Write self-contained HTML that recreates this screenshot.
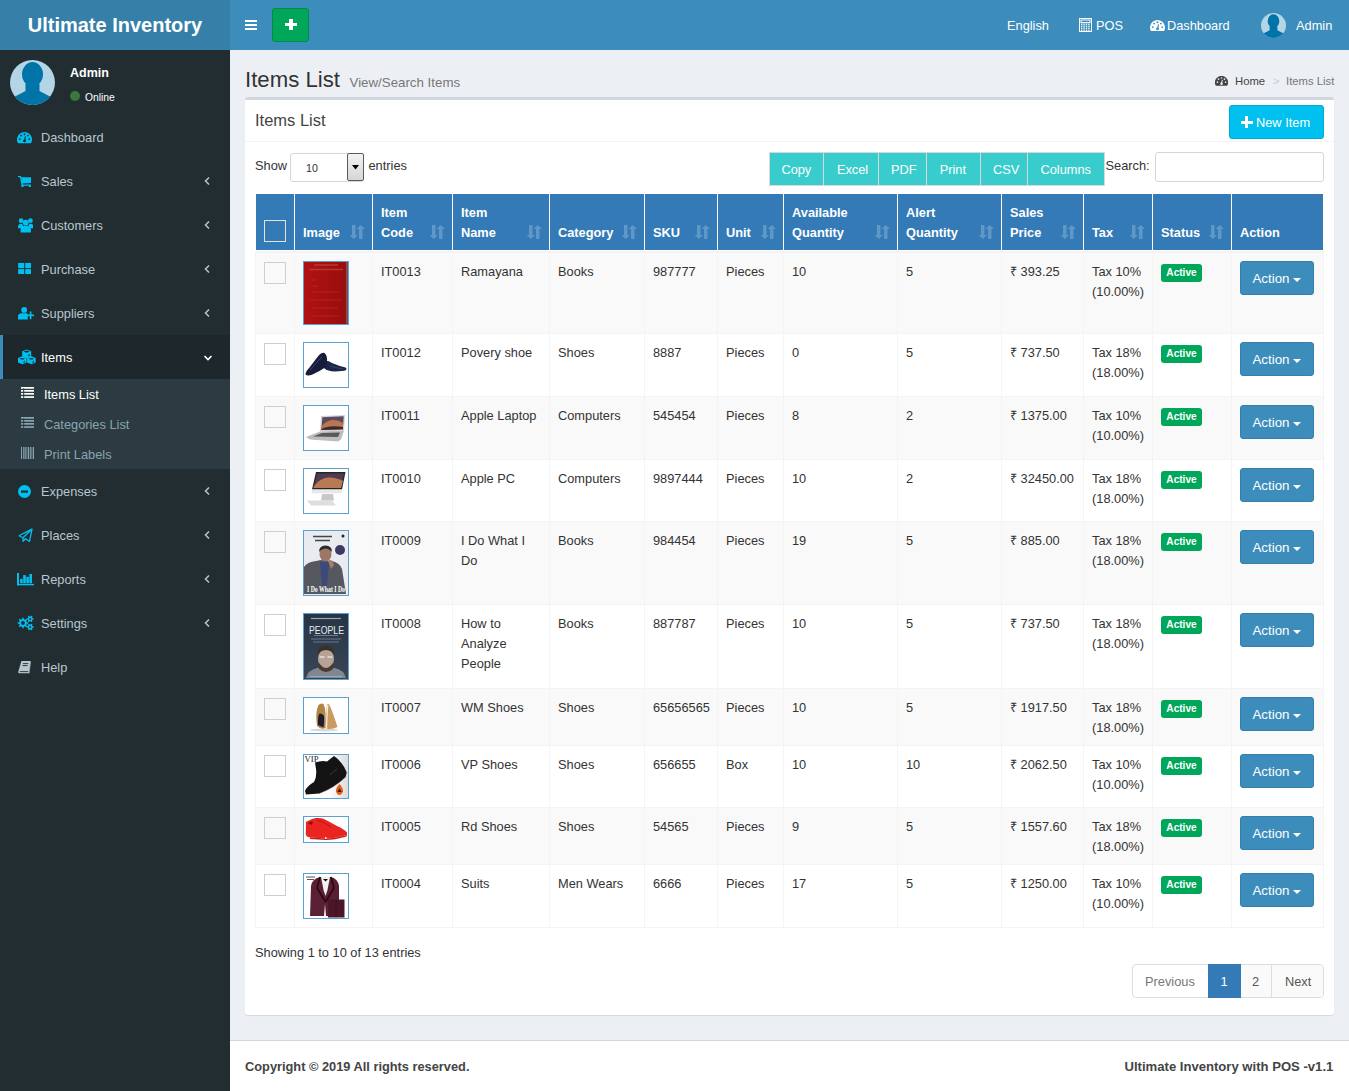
<!DOCTYPE html>
<html><head><meta charset="utf-8">
<style>
*{box-sizing:border-box;}
html,body{margin:0;padding:0;}
body{width:1349px;height:1091px;overflow:hidden;position:relative;font-family:"Liberation Sans",sans-serif;font-size:12.8px;color:#333;background:#ecf0f5;}
.abs{position:absolute;}
/* header */
#logo{left:0;top:0;width:230px;height:50px;background:#367fa9;color:#fff;font-weight:bold;font-size:20px;line-height:50px;text-align:center;}
#nav{left:230px;top:0;width:1119px;height:50px;background:#3c8dbc;}
.hb{position:absolute;left:245px;width:12px;height:2px;background:#fff;}
#plus{left:272px;top:8px;width:37px;height:34px;background:#00a65a;border:1px solid #008d4c;border-radius:3px;}
.navtxt{position:absolute;top:15.5px;line-height:20px;color:#fff;font-size:12.8px;white-space:nowrap;}
/* sidebar */
#side{left:0;top:50px;width:230px;height:1041px;background:#222d32;}
.mi{position:absolute;left:0;width:230px;height:44px;}
.mi .t{position:absolute;left:41px;top:13px;line-height:20px;color:#b8c7ce;font-size:12.8px;}
.mi svg.ic{position:absolute;left:17px;top:14px;}
.mi .ch{position:absolute;left:203px;top:17px;}
.sub{position:absolute;left:0;width:230px;height:30px;}
.sub .t{position:absolute;left:44px;top:6px;line-height:20px;color:#8aa4af;font-size:12.8px;}
.sub svg{position:absolute;left:20px;top:9px;}
/* content */
#ptitle{left:245px;top:64.5px;font-size:22.2px;line-height:30px;color:#333;white-space:nowrap;}
#psub{left:349.5px;top:73.5px;font-size:13.3px;line-height:18px;color:#777;white-space:nowrap;}
#bc{top:73px;font-size:11.3px;line-height:16px;color:#444;white-space:nowrap;}
#box{left:245px;top:97px;width:1089px;height:918px;background:#fff;border-top:3px solid #d2d6de;border-radius:3px;box-shadow:0 1px 1px rgba(0,0,0,0.1);}
#footer{left:230px;top:1040px;width:1119px;height:51px;background:#fff;border-top:1px solid #d2d6de;}
table.dt{position:absolute;left:255px;top:194px;border-collapse:collapse;table-layout:fixed;font-size:12.8px;}
table.dt th{background:#337ab7;color:#fff;font-weight:bold;text-align:left;vertical-align:bottom;border:1px solid #fff;border-top:0;border-bottom:0;padding:8px 8px 8px 8px;line-height:20px;position:relative;}
table.dt td{border:1px solid #f4f4f4;padding:8px;line-height:20px;vertical-align:top;color:#333;}
table.dt tr.odd td{background:#f9f9f9;}
.th{font-weight:bold;color:#fff;line-height:20px;white-space:nowrap;}
.td{padding-top:1px;line-height:20px;color:#333;white-space:nowrap;}
.lbl{width:40.5px;height:17.6px;background:#00a65a;border-radius:3px;color:#fff;font-weight:bold;font-size:10.1px;line-height:17.6px;text-align:center;padding-left:0.5px;}
.abtn{width:74px;height:34px;background:#3c8dbc;border:1px solid #367fa9;border-radius:3px;color:#fff;}
.abtn span{position:absolute;left:11.5px;top:7px;line-height:20px;font-size:13.3px;}
</style></head><body>
<div id="logo" class="abs">Ultimate Inventory</div>
<div id="nav" class="abs"></div>
<div class="hb" style="top:20px"></div><div class="hb" style="top:24px"></div><div class="hb" style="top:28px"></div>
<div id="plus" class="abs"></div>

<div class="navtxt" style="left:1007px;">English</div>
<svg class="abs" style="left:1079px;top:18px" width="13" height="14" viewBox="0 0 13 14"><rect x="0.5" y="0.5" width="12" height="13" fill="none" stroke="#fff" stroke-width="1"/><rect x="2" y="2" width="9" height="2.6" fill="none" stroke="#fff" stroke-width="1"/><rect x="2.0" y="5.6" width="1.4" height="1.3" fill="#fff"/><rect x="2.0" y="7.6" width="1.4" height="1.3" fill="#fff"/><rect x="2.0" y="9.6" width="1.4" height="1.3" fill="#fff"/><rect x="2.0" y="11.6" width="1.4" height="1.3" fill="#fff"/><rect x="4.4" y="5.6" width="1.4" height="1.3" fill="#fff"/><rect x="4.4" y="7.6" width="1.4" height="1.3" fill="#fff"/><rect x="4.4" y="9.6" width="1.4" height="1.3" fill="#fff"/><rect x="4.4" y="11.6" width="1.4" height="1.3" fill="#fff"/><rect x="6.8" y="5.6" width="1.4" height="1.3" fill="#fff"/><rect x="6.8" y="7.6" width="1.4" height="1.3" fill="#fff"/><rect x="6.8" y="9.6" width="1.4" height="1.3" fill="#fff"/><rect x="6.8" y="11.6" width="1.4" height="1.3" fill="#fff"/><rect x="9.2" y="5.6" width="1.4" height="1.3" fill="#fff"/><rect x="9.2" y="7.6" width="1.4" height="1.3" fill="#fff"/><rect x="9.2" y="9.6" width="1.4" height="1.3" fill="#fff"/><rect x="9.2" y="11.6" width="1.4" height="1.3" fill="#fff"/></svg>
<div class="navtxt" style="left:1096px;">POS</div>
<svg class="abs" style="left:1150px;top:19.8px" width="15" height="11.5" viewBox="0 0 15 11.5"><path d="M1.03 11.3 A7.5 7.5 0 1 1 13.97 11.3 Z" fill="#fff"/><circle cx="7.5" cy="2.3" r="0.95" fill="#3c8dbc"/><circle cx="4.1" cy="3.6" r="0.95" fill="#3c8dbc"/><circle cx="10.9" cy="3.6" r="0.95" fill="#3c8dbc"/><circle cx="2.8" cy="7.1" r="0.95" fill="#3c8dbc"/><circle cx="12.2" cy="7.1" r="0.95" fill="#3c8dbc"/><circle cx="7.5" cy="8.9" r="1.45" fill="#3c8dbc"/><path d="M6.8 8.8 L8.0 4.2 L9.0 4.5 L8.2 9.1Z" fill="#3c8dbc"/></svg>
<div class="navtxt" style="left:1167px;">Dashboard</div>
<svg class="abs" style="left:1261px;top:12.5px" width="25" height="25" viewBox="0 0 45 45"><defs><clipPath id="cav2"><circle cx="22.5" cy="22.5" r="22.5"/></clipPath></defs><g clip-path="url(#cav2)"><rect width="45" height="45" fill="#b4d5e6"/><path d="M15.5 24 L15.5 31 Q10 34 3 37.5 L0 45 L45 45 L42 37.5 Q35 34 29.5 31 L29.5 24Z M12 14.3 A10.5 12.2 0 1 0 33 14.3 A10.5 12.2 0 1 0 12 14.3Z" fill="#0074a8"/></g></svg>
<div class="navtxt" style="left:1296px;">Admin</div>
<div class="abs" style="left:284.5px;top:23px;width:12px;height:3px;background:#fff"></div>
<div class="abs" style="left:289px;top:19px;width:3.5px;height:11px;background:#fff"></div>


<div id="side" class="abs"></div>
<svg class="abs" style="left:10px;top:60px" width="45" height="45" viewBox="0 0 45 45"><defs><clipPath id="cav"><circle cx="22.5" cy="22.5" r="22.5"/></clipPath></defs><g clip-path="url(#cav)"><rect width="45" height="45" fill="#b4d5e6"/><path d="M15.5 24 L15.5 31 Q10 34 3 37.5 L0 45 L45 45 L42 37.5 Q35 34 29.5 31 L29.5 24Z M12 14.3 A10.5 12.2 0 1 0 33 14.3 A10.5 12.2 0 1 0 12 14.3Z" fill="#0074a8"/></g></svg>
<div class="abs" style="left:70px;top:63px;font-weight:bold;font-size:12.5px;line-height:20px;color:#fff">Admin</div>
<div class="abs" style="left:70px;top:91px;width:10px;height:10px;border-radius:50%;background:#3c763d"></div>
<div class="abs" style="left:85px;top:89.5px;font-size:10.3px;line-height:16px;color:#fff">Online</div>
<div class="mi" style="top:115px;"><svg style="position:absolute;left:17.2px;top:17px" width="15" height="11.5" viewBox="0 0 15 11.5"><path d="M1.03 11.3 A7.5 7.5 0 1 1 13.97 11.3 Z" fill="#00c0ef"/><circle cx="7.5" cy="2.3" r="0.95" fill="#222d32"/><circle cx="4.1" cy="3.6" r="0.95" fill="#222d32"/><circle cx="10.9" cy="3.6" r="0.95" fill="#222d32"/><circle cx="2.8" cy="7.1" r="0.95" fill="#222d32"/><circle cx="12.2" cy="7.1" r="0.95" fill="#222d32"/><circle cx="7.5" cy="8.9" r="1.45" fill="#222d32"/><path d="M6.8 8.8 L8.0 4.2 L9.0 4.5 L8.2 9.1Z" fill="#222d32"/></svg><div class="t" style="">Dashboard</div></div>
<div class="mi" style="top:159px;"><svg style="position:absolute;left:17.7px;top:16.5px" width="13.5" height="11.5" viewBox="0 0 13 11"><path d="M0 0.6 L2.4 0.6 L4 8.7 L12.4 8.7" stroke="#00c0ef" stroke-width="1.2" fill="none"/><path d="M3 1.2 L13.2 1.2 L12.8 6.6 L3.9 7.2Z" fill="#00c0ef"/><rect x="3.2" y="8.8" width="2.2" height="2.4" fill="#00c0ef"/><rect x="10.3" y="8.8" width="2.2" height="2.4" fill="#00c0ef"/></svg><div class="t" style="">Sales</div><svg class="ch" width="8" height="10" viewBox="0 0 8 10" style="left:203px;top:17px"><path d="M6 1.5 L2.5 5 L6 8.5" stroke="#b8c7ce" stroke-width="1.5" fill="none"/></svg></div>
<div class="mi" style="top:203px;"><svg style="position:absolute;left:17.7px;top:15px" width="15.5" height="14.5" viewBox="0 0 15 14"><circle cx="3" cy="2.6" r="2.3" fill="#00c0ef"/><circle cx="12" cy="2.6" r="2.3" fill="#00c0ef"/><circle cx="7.5" cy="4.5" r="2.8" fill="#00c0ef"/><path d="M0 9 Q0 5.5 3 5.5 Q5 5.5 5 8 L5 10 L0 10Z" fill="#00c0ef"/><path d="M15 9 Q15 5.5 12 5.5 Q10 5.5 10 8 L10 10 L15 10Z" fill="#00c0ef"/><path d="M2.5 14 L2.5 11 Q2.5 7.5 7.5 7.5 Q12.5 7.5 12.5 11 L12.5 14Z" fill="#00c0ef"/></svg><div class="t" style="">Customers</div><svg class="ch" width="8" height="10" viewBox="0 0 8 10" style="left:203px;top:17px"><path d="M6 1.5 L2.5 5 L6 8.5" stroke="#b8c7ce" stroke-width="1.5" fill="none"/></svg></div>
<div class="mi" style="top:247px;"><svg style="position:absolute;left:17.7px;top:16px" width="13.5" height="11.2" viewBox="0 0 13 11"><rect x="0" y="0" width="6" height="5" fill="#00c0ef"/><rect x="7" y="0" width="6" height="5" fill="#00c0ef"/><rect x="0" y="6" width="6" height="5" fill="#00c0ef"/><rect x="7" y="6" width="6" height="5" fill="#00c0ef"/></svg><div class="t" style="">Purchase</div><svg class="ch" width="8" height="10" viewBox="0 0 8 10" style="left:203px;top:17px"><path d="M6 1.5 L2.5 5 L6 8.5" stroke="#b8c7ce" stroke-width="1.5" fill="none"/></svg></div>
<div class="mi" style="top:291px;"><svg style="position:absolute;left:17.7px;top:16px" width="16.5" height="12.5" viewBox="0 0 16 12"><circle cx="6" cy="2.8" r="2.8" fill="#00c0ef"/><path d="M0 12 L0 9 Q0 6 4 6 L8 6 Q9 6 9.5 6.5 L9.5 12Z" fill="#00c0ef"/><rect x="8.5" y="7.2" width="7.5" height="1.6" fill="#00c0ef"/><rect x="11.4" y="4.3" width="1.6" height="7.5" fill="#00c0ef"/></svg><div class="t" style="">Suppliers</div><svg class="ch" width="8" height="10" viewBox="0 0 8 10" style="left:203px;top:17px"><path d="M6 1.5 L2.5 5 L6 8.5" stroke="#b8c7ce" stroke-width="1.5" fill="none"/></svg></div>
<div class="mi" style="top:335px;background:#1e282c;box-shadow:inset 3px 0 0 #3c8dbc;"><svg style="position:absolute;left:17.7px;top:14px;overflow:visible" width="17.5" height="14.5" viewBox="0 0 17.5 14.5"><path d="M4.2 2.3 L8.7 0.6 L13.2 2.3 L13.2 7.5 L8.7 9.2 L4.2 7.5Z" fill="#00c0ef"/><path d="M5.6 2.6 L8.7 1.6 L11.8 2.6 L8.7 3.8Z" fill="#1e282c"/><path d="M0 9 L4.3 7.3 L8.6 9 L8.6 13.6 L4.3 15.3 L0 13.6Z" fill="#00c0ef"/><path d="M9.1 9 L13.4 7.3 L17.7 9 L17.7 13.6 L13.4 15.3 L9.1 13.6Z" fill="#00c0ef"/><path d="M1.6 9.3 L6.8 9.3 L5.6 10.5 L2.8 10.5Z" fill="#1e282c"/><path d="M10.7 9.3 L15.9 9.3 L14.7 10.5 L11.9 10.5Z" fill="#1e282c"/><path d="M5.3 13 L6.8 11.6 L6.8 13.2 L5.5 14Z" fill="#1e282c"/><path d="M14.4 13 L15.9 11.6 L15.9 13.2 L14.6 14Z" fill="#1e282c"/><path d="M10 6 L11.8 5 L11.8 6.5 L10.4 7.3Z" fill="#1e282c"/></svg><div class="t" style="color:#fff;">Items</div><svg class="ch" width="10" height="10" viewBox="0 0 10 10" style="left:203px;top:18px"><path d="M1.5 3 L5 6.5 L8.5 3" stroke="#fff" stroke-width="1.6" fill="none"/></svg></div>
<div class="abs" style="left:0;top:379px;width:230px;height:90px;background:#2c3b41"></div>
<div class="sub" style="top:379px"><svg style="position:absolute;left:20.5px;top:8px" width="13" height="11" viewBox="0 0 13 11"><rect x="0" y="0" width="2.2" height="1.7" fill="#fff"/><rect x="3.2" y="0" width="9.8" height="1.7" fill="#fff"/><rect x="0" y="3" width="2.2" height="1.7" fill="#fff"/><rect x="3.2" y="3" width="9.8" height="1.7" fill="#fff"/><rect x="0" y="6" width="2.2" height="1.7" fill="#fff"/><rect x="3.2" y="6" width="9.8" height="1.7" fill="#fff"/><rect x="0" y="9.2" width="2.2" height="1.7" fill="#fff"/><rect x="3.2" y="9.2" width="9.8" height="1.7" fill="#fff"/><rect x="0" y="0" width="13" height="1.2" fill="#fff"/></svg><div class="t" style="color:#fff;">Items List</div></div>
<div class="sub" style="top:409px"><svg style="position:absolute;left:20.5px;top:8px" width="13" height="11" viewBox="0 0 13 11"><rect x="0" y="0" width="2.2" height="1.7" fill="#8aa4af"/><rect x="3.2" y="0" width="9.8" height="1.7" fill="#8aa4af"/><rect x="0" y="3" width="2.2" height="1.7" fill="#8aa4af"/><rect x="3.2" y="3" width="9.8" height="1.7" fill="#8aa4af"/><rect x="0" y="6" width="2.2" height="1.7" fill="#8aa4af"/><rect x="3.2" y="6" width="9.8" height="1.7" fill="#8aa4af"/><rect x="0" y="9.2" width="2.2" height="1.7" fill="#8aa4af"/><rect x="3.2" y="9.2" width="9.8" height="1.7" fill="#8aa4af"/><rect x="0" y="0" width="13" height="1.2" fill="#8aa4af"/></svg><div class="t" style="">Categories List</div></div>
<div class="sub" style="top:439px"><svg style="position:absolute;left:20.5px;top:8px" width="13" height="12" viewBox="0 0 13 12"><rect x="0" y="0" width="1" height="12" fill="#8aa4af"/><rect x="2" y="0" width="0.8" height="12" fill="#8aa4af"/><rect x="3.5" y="0" width="1.2" height="12" fill="#8aa4af"/><rect x="5.5" y="0" width="0.8" height="12" fill="#8aa4af"/><rect x="7" y="0" width="1.2" height="12" fill="#8aa4af"/><rect x="9" y="0" width="0.8" height="12" fill="#8aa4af"/><rect x="10.5" y="0" width="0.8" height="12" fill="#8aa4af"/><rect x="12" y="0" width="1" height="12" fill="#8aa4af"/></svg><div class="t" style="">Print Labels</div></div>
<div class="mi" style="top:469px;"><svg style="position:absolute;left:17.5px;top:15.5px" width="13" height="13" viewBox="0 0 13 13"><circle cx="6.5" cy="6.5" r="6.5" fill="#00c0ef"/><rect x="3" y="5.5" width="7" height="2.2" fill="#222d32"/></svg><div class="t" style="">Expenses</div><svg class="ch" width="8" height="10" viewBox="0 0 8 10" style="left:203px;top:17px"><path d="M6 1.5 L2.5 5 L6 8.5" stroke="#b8c7ce" stroke-width="1.5" fill="none"/></svg></div>
<div class="mi" style="top:513px;"><svg style="position:absolute;left:17.5px;top:15px" width="15" height="14.5" viewBox="0 0 15 14"><path d="M0.8 7.5 L14 0.8 L11.5 13.2 L7.5 10.5 L5 13 L5 9.5 L14 0.8 M0.8 7.5 L5 9.5" stroke="#00c0ef" stroke-width="1.3" fill="none" stroke-linejoin="round"/></svg><div class="t" style="">Places</div><svg class="ch" width="8" height="10" viewBox="0 0 8 10" style="left:203px;top:17px"><path d="M6 1.5 L2.5 5 L6 8.5" stroke="#b8c7ce" stroke-width="1.5" fill="none"/></svg></div>
<div class="mi" style="top:557px;"><svg style="position:absolute;left:17px;top:16px" width="17" height="12.5" viewBox="0 0 17 12.5"><rect x="0" y="0" width="2" height="12.3" fill="#00c0ef"/><rect x="0" y="10.9" width="17" height="1.4" fill="#00c0ef"/><rect x="3.1" y="5.9" width="2.6" height="4.4" fill="#00c0ef"/><rect x="6.2" y="2.1" width="2.6" height="8.2" fill="#00c0ef"/><rect x="9.3" y="3.9" width="2.6" height="6.4" fill="#00c0ef"/><rect x="12.4" y="1" width="2.6" height="9.3" fill="#00c0ef"/></svg><div class="t" style="">Reports</div><svg class="ch" width="8" height="10" viewBox="0 0 8 10" style="left:203px;top:17px"><path d="M6 1.5 L2.5 5 L6 8.5" stroke="#b8c7ce" stroke-width="1.5" fill="none"/></svg></div>
<div class="mi" style="top:601px;"><svg style="position:absolute;left:17.5px;top:15px;overflow:visible" width="15.5" height="14" viewBox="0 0 15.5 14"><path fill-rule="evenodd" d="M8.81 6.16 L10.25 6.27 L10.25 7.73 L8.81 7.84 L8.28 9.10 L9.23 10.20 L8.20 11.23 L7.10 10.28 L5.84 10.81 L5.73 12.25 L4.27 12.25 L4.16 10.81 L2.90 10.28 L1.80 11.23 L0.77 10.20 L1.72 9.10 L1.19 7.84 L-0.25 7.73 L-0.25 6.27 L1.19 6.16 L1.72 4.90 L0.77 3.80 L1.80 2.77 L2.90 3.72 L4.16 3.19 L4.27 1.75 L5.73 1.75 L5.84 3.19 L7.10 3.72 L8.20 2.77 L9.23 3.80 L8.28 4.90Z M6.90 7.00 A1.9 1.9 0 1 0 3.10 7.00 A1.9 1.9 0 1 0 6.90 7.00Z" fill="#00c0ef"/><path fill-rule="evenodd" d="M14.60 2.19 L15.64 2.26 L15.64 3.54 L14.60 3.61 L14.01 4.62 L14.47 5.56 L13.37 6.20 L12.78 5.33 L11.62 5.33 L11.03 6.20 L9.93 5.56 L10.39 4.62 L9.80 3.61 L8.76 3.54 L8.76 2.26 L9.80 2.19 L10.39 1.18 L9.93 0.24 L11.03 -0.40 L11.62 0.47 L12.78 0.47 L13.37 -0.40 L14.47 0.24 L14.01 1.18Z M13.20 2.90 A1.0 1.0 0 1 0 11.20 2.90 A1.0 1.0 0 1 0 13.20 2.90Z" fill="#00c0ef"/><path fill-rule="evenodd" d="M14.60 10.29 L15.64 10.36 L15.64 11.64 L14.60 11.71 L14.01 12.72 L14.47 13.66 L13.37 14.30 L12.78 13.43 L11.62 13.43 L11.03 14.30 L9.93 13.66 L10.39 12.72 L9.80 11.71 L8.76 11.64 L8.76 10.36 L9.80 10.29 L10.39 9.28 L9.93 8.34 L11.03 7.70 L11.62 8.57 L12.78 8.57 L13.37 7.70 L14.47 8.34 L14.01 9.28Z M13.20 11.00 A1.0 1.0 0 1 0 11.20 11.00 A1.0 1.0 0 1 0 13.20 11.00Z" fill="#00c0ef"/></svg><div class="t" style="">Settings</div><svg class="ch" width="8" height="10" viewBox="0 0 8 10" style="left:203px;top:17px"><path d="M6 1.5 L2.5 5 L6 8.5" stroke="#b8c7ce" stroke-width="1.5" fill="none"/></svg></div>
<div class="mi" style="top:645px;"><svg style="position:absolute;left:17.6px;top:16px" width="13.5" height="12.5" viewBox="0 0 13.5 12.5"><path d="M3.4 0 L12.8 0 L11.2 12.3 L1.2 12.3 Q0 12.3 0.2 11 Z" fill="#b8c7ce"/><path d="M4.8 2.6 H10.3 M4.5 4.6 H9.5 M1.8 10.6 H10.2" stroke="#222d32" stroke-width="0.9"/><path d="M12.8 0 L11.2 12.3" stroke="#8aa0aa" stroke-width="0.6"/></svg><div class="t" style="">Help</div></div>

<div id="box" class="abs"></div>

<div id="ptitle" class="abs">Items List</div>
<div id="psub" class="abs">View/Search Items</div>
<svg class="abs" style="left:1215px;top:76px" width="13" height="10" viewBox="0 0 15 11.5"><path d="M1.03 11.3 A7.5 7.5 0 1 1 13.97 11.3 Z" fill="#444"/><circle cx="7.5" cy="2.3" r="0.95" fill="#ecf0f5"/><circle cx="4.1" cy="3.6" r="0.95" fill="#ecf0f5"/><circle cx="10.9" cy="3.6" r="0.95" fill="#ecf0f5"/><circle cx="2.8" cy="7.1" r="0.95" fill="#ecf0f5"/><circle cx="12.2" cy="7.1" r="0.95" fill="#ecf0f5"/><circle cx="7.5" cy="8.9" r="1.45" fill="#ecf0f5"/><path d="M6.8 8.8 L8.0 4.2 L9.0 4.5 L8.2 9.1Z" fill="#ecf0f5"/></svg>
<div id="bc" class="abs" style="left:1235px;">Home</div>
<div id="bc" class="abs" style="left:1273px;color:#ccc">&gt;</div>
<div id="bc" class="abs" style="left:1286px;color:#777">Items List</div>

<div class="abs" style="left:255px;top:109px;font-size:16.5px;line-height:22px;color:#444">Items List</div>
<div class="abs" style="left:1229px;top:105px;width:95px;height:34px;background:#00c0ef;border:1px solid #00acd6;border-radius:3px;"></div>
<div class="abs" style="left:1241px;top:120.5px;width:11.5px;height:3.2px;background:#fff"></div>
<div class="abs" style="left:1245.2px;top:116.3px;width:3.2px;height:11.5px;background:#fff"></div>
<div class="abs" style="left:1256px;top:113px;font-size:12.8px;line-height:20px;color:#fff">New Item</div>
<div class="abs" style="left:245px;top:141px;width:1089px;height:1px;background:#f4f4f4"></div>
<div class="abs" style="left:255px;top:156px;line-height:20px">Show</div>
<div class="abs" style="left:290px;top:152.5px;width:74px;height:29px;border:1px solid #d2d6de;border-radius:3px;background:#fff"></div>
<div class="abs" style="left:306px;top:161px;font-size:10.6px;line-height:14px;color:#333">10</div>
<div class="abs" style="left:347px;top:153px;width:17px;height:28px;border:1px solid #5a5a5a;background:linear-gradient(#f3f3f3,#d6d6d6);border-radius:2px"></div>
<svg class="abs" style="left:352px;top:164.5px" width="7" height="5" viewBox="0 0 7 5"><path d="M0 0 L7 0 L3.5 4.5Z" fill="#000"/></svg>
<div class="abs" style="left:368.5px;top:156px;line-height:20px">entries</div>
<div class="abs" style="left:769px;top:152px;width:335.5px;height:34px;background:#39cccc;border:1px solid #d8d8d8;"></div>
<div class="abs" style="left:823.0px;top:152px;width:1px;height:34px;background:#d8d8d8"></div>
<div class="abs" style="left:877.9px;top:152px;width:1px;height:34px;background:#d8d8d8"></div>
<div class="abs" style="left:925.8px;top:152px;width:1px;height:34px;background:#d8d8d8"></div>
<div class="abs" style="left:980.0px;top:152px;width:1px;height:34px;background:#d8d8d8"></div>
<div class="abs" style="left:1027.1px;top:152px;width:1px;height:34px;background:#d8d8d8"></div>
<div class="abs" style="left:781.4px;top:160px;line-height:20px;color:#fff">Copy</div>
<div class="abs" style="left:836.9px;top:160px;line-height:20px;color:#fff">Excel</div>
<div class="abs" style="left:891px;top:160px;line-height:20px;color:#fff">PDF</div>
<div class="abs" style="left:939.7px;top:160px;line-height:20px;color:#fff">Print</div>
<div class="abs" style="left:993px;top:160px;line-height:20px;color:#fff">CSV</div>
<div class="abs" style="left:1040.5px;top:160px;line-height:20px;color:#fff">Columns</div>
<div class="abs" style="left:1105.5px;top:156px;line-height:20px">Search:</div>
<div class="abs" style="left:1155px;top:152px;width:168.5px;height:30px;border:1px solid #d2d6de;border-radius:3px;background:#fff"></div>

<div id="footer" class="abs"></div>

<!--FOOT-->
<div class="abs" style="left:255px;top:943px;line-height:20px">Showing 1 to 10 of 13 entries</div>
<div class="abs" style="left:1132px;top:964px;width:191.5px;height:34px;border:1px solid #ddd;border-radius:4px;background:#fff"></div>
<div class="abs" style="left:1208px;top:964px;width:33px;height:34px;background:#337ab7;border:1px solid #337ab7"></div>
<div class="abs" style="left:1241px;top:965px;width:30px;height:32px;background:#fafafa"></div>
<div class="abs" style="left:1271px;top:965px;width:1px;height:32px;background:#ddd"></div>
<div class="abs" style="left:1272px;top:965px;width:50.5px;height:32px;background:#fafafa;border-radius:0 3px 3px 0"></div>
<div class="abs" style="left:1145px;top:972px;line-height:20px;color:#777">Previous</div>
<div class="abs" style="left:1220.5px;top:972px;line-height:20px;color:#fff">1</div>
<div class="abs" style="left:1252px;top:972px;line-height:20px;color:#555">2</div>
<div class="abs" style="left:1285px;top:972px;line-height:20px;color:#555">Next</div>
<div class="abs" style="left:245px;top:1056.5px;line-height:20px;font-weight:bold;color:#444">Copyright &copy; 2019 All rights reserved.</div>
<div class="abs" style="left:1124.5px;top:1056.5px;line-height:20px;font-weight:bold;font-size:13.1px;color:#444">Ultimate Inventory with POS -v1.1</div>
<!--/FOOT-->





<!--TABLE-->
<div class="abs" style="left:256px;top:194px;width:1067px;height:56px;background:#337ab7"></div>
<div class="abs" style="left:294px;top:194px;width:1px;height:56px;background:#fff"></div>
<div class="abs" style="left:372px;top:194px;width:1px;height:56px;background:#fff"></div>
<div class="abs" style="left:452px;top:194px;width:1px;height:56px;background:#fff"></div>
<div class="abs" style="left:549px;top:194px;width:1px;height:56px;background:#fff"></div>
<div class="abs" style="left:644px;top:194px;width:1px;height:56px;background:#fff"></div>
<div class="abs" style="left:717px;top:194px;width:1px;height:56px;background:#fff"></div>
<div class="abs" style="left:783px;top:194px;width:1px;height:56px;background:#fff"></div>
<div class="abs" style="left:897px;top:194px;width:1px;height:56px;background:#fff"></div>
<div class="abs" style="left:1001px;top:194px;width:1px;height:56px;background:#fff"></div>
<div class="abs" style="left:1083px;top:194px;width:1px;height:56px;background:#fff"></div>
<div class="abs" style="left:1152px;top:194px;width:1px;height:56px;background:#fff"></div>
<div class="abs" style="left:1231px;top:194px;width:1px;height:56px;background:#fff"></div>
<div class="abs" style="left:255px;top:250px;width:1068px;height:1px;background:#fff"></div>
<div class="abs th" style="left:303px;top:223px">Image</div>
<svg class="abs" style="left:350px;top:225px" width="15" height="14" viewBox="0 0 15 14"><path d="M2 0 H5.5 V10 H8 L3.75 14 L-0.5 10 H2Z M9 14 H12.5 V4 H15 L10.75 0 L6.5 4 H9Z" fill="#fff" fill-opacity="0.22"/></svg>
<div class="abs th" style="left:381px;top:203px">Item<br>Code</div>
<svg class="abs" style="left:430px;top:225px" width="15" height="14" viewBox="0 0 15 14"><path d="M2 0 H5.5 V10 H8 L3.75 14 L-0.5 10 H2Z M9 14 H12.5 V4 H15 L10.75 0 L6.5 4 H9Z" fill="#fff" fill-opacity="0.22"/></svg>
<div class="abs th" style="left:461px;top:203px">Item<br>Name</div>
<svg class="abs" style="left:527px;top:225px" width="15" height="14" viewBox="0 0 15 14"><path d="M2 0 H5.5 V10 H8 L3.75 14 L-0.5 10 H2Z M9 14 H12.5 V4 H15 L10.75 0 L6.5 4 H9Z" fill="#fff" fill-opacity="0.22"/></svg>
<div class="abs th" style="left:558px;top:223px">Category</div>
<svg class="abs" style="left:622px;top:225px" width="15" height="14" viewBox="0 0 15 14"><path d="M2 0 H5.5 V10 H8 L3.75 14 L-0.5 10 H2Z M9 14 H12.5 V4 H15 L10.75 0 L6.5 4 H9Z" fill="#fff" fill-opacity="0.22"/></svg>
<div class="abs th" style="left:653px;top:223px">SKU</div>
<svg class="abs" style="left:695px;top:225px" width="15" height="14" viewBox="0 0 15 14"><path d="M2 0 H5.5 V10 H8 L3.75 14 L-0.5 10 H2Z M9 14 H12.5 V4 H15 L10.75 0 L6.5 4 H9Z" fill="#fff" fill-opacity="0.22"/></svg>
<div class="abs th" style="left:726px;top:223px">Unit</div>
<svg class="abs" style="left:761px;top:225px" width="15" height="14" viewBox="0 0 15 14"><path d="M2 0 H5.5 V10 H8 L3.75 14 L-0.5 10 H2Z M9 14 H12.5 V4 H15 L10.75 0 L6.5 4 H9Z" fill="#fff" fill-opacity="0.22"/></svg>
<div class="abs th" style="left:792px;top:203px">Available<br>Quantity</div>
<svg class="abs" style="left:875px;top:225px" width="15" height="14" viewBox="0 0 15 14"><path d="M2 0 H5.5 V10 H8 L3.75 14 L-0.5 10 H2Z M9 14 H12.5 V4 H15 L10.75 0 L6.5 4 H9Z" fill="#fff" fill-opacity="0.22"/></svg>
<div class="abs th" style="left:906px;top:203px">Alert<br>Quantity</div>
<svg class="abs" style="left:979px;top:225px" width="15" height="14" viewBox="0 0 15 14"><path d="M2 0 H5.5 V10 H8 L3.75 14 L-0.5 10 H2Z M9 14 H12.5 V4 H15 L10.75 0 L6.5 4 H9Z" fill="#fff" fill-opacity="0.22"/></svg>
<div class="abs th" style="left:1010px;top:203px">Sales<br>Price</div>
<svg class="abs" style="left:1061px;top:225px" width="15" height="14" viewBox="0 0 15 14"><path d="M2 0 H5.5 V10 H8 L3.75 14 L-0.5 10 H2Z M9 14 H12.5 V4 H15 L10.75 0 L6.5 4 H9Z" fill="#fff" fill-opacity="0.22"/></svg>
<div class="abs th" style="left:1092px;top:223px">Tax</div>
<svg class="abs" style="left:1130px;top:225px" width="15" height="14" viewBox="0 0 15 14"><path d="M2 0 H5.5 V10 H8 L3.75 14 L-0.5 10 H2Z M9 14 H12.5 V4 H15 L10.75 0 L6.5 4 H9Z" fill="#fff" fill-opacity="0.22"/></svg>
<div class="abs th" style="left:1161px;top:223px">Status</div>
<svg class="abs" style="left:1209px;top:225px" width="15" height="14" viewBox="0 0 15 14"><path d="M2 0 H5.5 V10 H8 L3.75 14 L-0.5 10 H2Z M9 14 H12.5 V4 H15 L10.75 0 L6.5 4 H9Z" fill="#fff" fill-opacity="0.22"/></svg>
<div class="abs th" style="left:1240px;top:223px">Action</div>
<div class="abs" style="left:264px;top:220px;width:22px;height:22px;border:1px solid #e8e2d8"></div>
<div class="abs" style="left:255px;top:253px;width:1068px;height:80px;background:#f9f9f9"></div>
<div class="abs" style="left:255px;top:251px;width:1068px;height:2px;background:#f4f4f4"></div>
<div class="abs" style="left:255px;top:251px;width:1px;height:82px;background:#f4f4f4"></div>
<div class="abs" style="left:294px;top:251px;width:1px;height:82px;background:#f4f4f4"></div>
<div class="abs" style="left:372px;top:251px;width:1px;height:82px;background:#f4f4f4"></div>
<div class="abs" style="left:452px;top:251px;width:1px;height:82px;background:#f4f4f4"></div>
<div class="abs" style="left:549px;top:251px;width:1px;height:82px;background:#f4f4f4"></div>
<div class="abs" style="left:644px;top:251px;width:1px;height:82px;background:#f4f4f4"></div>
<div class="abs" style="left:717px;top:251px;width:1px;height:82px;background:#f4f4f4"></div>
<div class="abs" style="left:783px;top:251px;width:1px;height:82px;background:#f4f4f4"></div>
<div class="abs" style="left:897px;top:251px;width:1px;height:82px;background:#f4f4f4"></div>
<div class="abs" style="left:1001px;top:251px;width:1px;height:82px;background:#f4f4f4"></div>
<div class="abs" style="left:1083px;top:251px;width:1px;height:82px;background:#f4f4f4"></div>
<div class="abs" style="left:1152px;top:251px;width:1px;height:82px;background:#f4f4f4"></div>
<div class="abs" style="left:1231px;top:251px;width:1px;height:82px;background:#f4f4f4"></div>
<div class="abs" style="left:1323px;top:251px;width:1px;height:82px;background:#f4f4f4"></div>
<div class="abs" style="left:264px;top:262px;width:22px;height:22px;border:1px solid #d2cdc6;background:#f9f9f9"></div>
<svg class="abs" width="46" height="64" viewBox="-1 -1 46 64" style="left:303px;top:261px"><defs><linearGradient id="rg" x1="0" x2="1"><stop offset="0" stop-color="#b01212"/><stop offset="0.9" stop-color="#9c0d0d"/><stop offset="1" stop-color="#7d2020"/></linearGradient></defs><rect width="44" height="62" fill="url(#rg)"/><path d="M10 3 H34 M5 7.5 H39" stroke="#c9584a" stroke-width="1.3" opacity="0.55"/><path d="M7 18 H12 M9 24 L14 24 M8 30 H36 M6 38 H38 M8 46 H34 M7 54 H36" stroke="#c24a3a" stroke-width="1" opacity="0.35"/><rect x="42" width="2" height="62" fill="#8a6a6a" opacity="0.6"/><rect x="-0.5" y="-0.5" width="45" height="63" fill="none" stroke="#5aa0d0" stroke-width="1"/></svg>
<div class="abs td" style="left:381px;top:261px">IT0013</div>
<div class="abs td" style="left:461px;top:261px">Ramayana</div>
<div class="abs td" style="left:558px;top:261px">Books</div>
<div class="abs td" style="left:653px;top:261px">987777</div>
<div class="abs td" style="left:726px;top:261px">Pieces</div>
<div class="abs td" style="left:792px;top:261px">10</div>
<div class="abs td" style="left:906px;top:261px">5</div>
<div class="abs td" style="left:1010px;top:261px">&#8377; 393.25</div>
<div class="abs td" style="left:1092px;top:261px">Tax 10%<br>(10.00%)</div>
<div class="abs lbl" style="left:1161px;top:264px">Active</div>
<div class="abs abtn" style="left:1240px;top:261px"><span>Action</span></div>
<svg class="abs" style="left:1293px;top:278px" width="8" height="4" viewBox="0 0 8 4"><path d="M0 0 H8 L4 4Z" fill="#fff"/></svg>
<div class="abs" style="left:255px;top:334px;width:1068px;height:62px;background:#fff"></div>
<div class="abs" style="left:255px;top:333px;width:1068px;height:1px;background:#f4f4f4"></div>
<div class="abs" style="left:255px;top:333px;width:1px;height:63px;background:#f4f4f4"></div>
<div class="abs" style="left:294px;top:333px;width:1px;height:63px;background:#f4f4f4"></div>
<div class="abs" style="left:372px;top:333px;width:1px;height:63px;background:#f4f4f4"></div>
<div class="abs" style="left:452px;top:333px;width:1px;height:63px;background:#f4f4f4"></div>
<div class="abs" style="left:549px;top:333px;width:1px;height:63px;background:#f4f4f4"></div>
<div class="abs" style="left:644px;top:333px;width:1px;height:63px;background:#f4f4f4"></div>
<div class="abs" style="left:717px;top:333px;width:1px;height:63px;background:#f4f4f4"></div>
<div class="abs" style="left:783px;top:333px;width:1px;height:63px;background:#f4f4f4"></div>
<div class="abs" style="left:897px;top:333px;width:1px;height:63px;background:#f4f4f4"></div>
<div class="abs" style="left:1001px;top:333px;width:1px;height:63px;background:#f4f4f4"></div>
<div class="abs" style="left:1083px;top:333px;width:1px;height:63px;background:#f4f4f4"></div>
<div class="abs" style="left:1152px;top:333px;width:1px;height:63px;background:#f4f4f4"></div>
<div class="abs" style="left:1231px;top:333px;width:1px;height:63px;background:#f4f4f4"></div>
<div class="abs" style="left:1323px;top:333px;width:1px;height:63px;background:#f4f4f4"></div>
<div class="abs" style="left:264px;top:343px;width:22px;height:22px;border:1px solid #d2cdc6;background:#fff"></div>
<svg class="abs" width="46" height="46" viewBox="-1 -1 46 46" style="left:303px;top:342px"><rect width="44" height="44" fill="#fff"/><path d="M19 18 Q24 17 28 20 Q35 23 41.5 24.5 Q44 26.5 40.5 27.8 L31 28.5 Q23 28 20.5 25.5 Z" fill="#1c2447"/><path d="M1.5 31.5 Q1.5 28.5 5.5 24.5 L13.5 14 Q17.5 9 20.5 10 Q23.5 12.5 23 18.5 L22 24 Q16 28 8.5 31.5 Q3.5 33.5 1.5 31.5Z" fill="#161c3a"/><path d="M6 27 Q12 20 18 14" stroke="#5a6a9a" stroke-width="0.8" fill="none" opacity="0.7"/><path d="M26 23 Q33 25 39 26" stroke="#5a6a9a" stroke-width="0.7" fill="none" opacity="0.6"/><rect x="-0.5" y="-0.5" width="45" height="45" fill="none" stroke="#5aa0d0" stroke-width="1"/></svg>
<div class="abs td" style="left:381px;top:342px">IT0012</div>
<div class="abs td" style="left:461px;top:342px">Povery shoe</div>
<div class="abs td" style="left:558px;top:342px">Shoes</div>
<div class="abs td" style="left:653px;top:342px">8887</div>
<div class="abs td" style="left:726px;top:342px">Pieces</div>
<div class="abs td" style="left:792px;top:342px">0</div>
<div class="abs td" style="left:906px;top:342px">5</div>
<div class="abs td" style="left:1010px;top:342px">&#8377; 737.50</div>
<div class="abs td" style="left:1092px;top:342px">Tax 18%<br>(18.00%)</div>
<div class="abs lbl" style="left:1161px;top:345px">Active</div>
<div class="abs abtn" style="left:1240px;top:342px"><span>Action</span></div>
<svg class="abs" style="left:1293px;top:359px" width="8" height="4" viewBox="0 0 8 4"><path d="M0 0 H8 L4 4Z" fill="#fff"/></svg>
<div class="abs" style="left:255px;top:397px;width:1068px;height:62px;background:#f9f9f9"></div>
<div class="abs" style="left:255px;top:396px;width:1068px;height:1px;background:#f4f4f4"></div>
<div class="abs" style="left:255px;top:396px;width:1px;height:63px;background:#f4f4f4"></div>
<div class="abs" style="left:294px;top:396px;width:1px;height:63px;background:#f4f4f4"></div>
<div class="abs" style="left:372px;top:396px;width:1px;height:63px;background:#f4f4f4"></div>
<div class="abs" style="left:452px;top:396px;width:1px;height:63px;background:#f4f4f4"></div>
<div class="abs" style="left:549px;top:396px;width:1px;height:63px;background:#f4f4f4"></div>
<div class="abs" style="left:644px;top:396px;width:1px;height:63px;background:#f4f4f4"></div>
<div class="abs" style="left:717px;top:396px;width:1px;height:63px;background:#f4f4f4"></div>
<div class="abs" style="left:783px;top:396px;width:1px;height:63px;background:#f4f4f4"></div>
<div class="abs" style="left:897px;top:396px;width:1px;height:63px;background:#f4f4f4"></div>
<div class="abs" style="left:1001px;top:396px;width:1px;height:63px;background:#f4f4f4"></div>
<div class="abs" style="left:1083px;top:396px;width:1px;height:63px;background:#f4f4f4"></div>
<div class="abs" style="left:1152px;top:396px;width:1px;height:63px;background:#f4f4f4"></div>
<div class="abs" style="left:1231px;top:396px;width:1px;height:63px;background:#f4f4f4"></div>
<div class="abs" style="left:1323px;top:396px;width:1px;height:63px;background:#f4f4f4"></div>
<div class="abs" style="left:264px;top:406px;width:22px;height:22px;border:1px solid #d2cdc6;background:#f9f9f9"></div>
<svg class="abs" width="46" height="46" viewBox="-1 -1 46 46" style="left:303px;top:405px"><rect width="44" height="44" fill="#fff"/><path d="M17 10 L41 9 L40 24.5 L16 25.5Z" fill="#d2d2d2"/><path d="M18.3 11.2 L39.7 10.3 L38.8 23.2 L17.4 24.1Z" fill="#5e4a5e"/><path d="M17.6 20 Q22 15 28 14 Q34 13.5 39.2 17 L38.8 23.2 L17.4 24.1Z" fill="#b8774f"/><path d="M17.5 23 Q25 19 39 21 L38.8 23.2 L17.4 24.1Z" fill="#3a2a30"/><path d="M2 31 L16 25.5 L40 24.5 L37 33.5 L34 35.5 L6 33.5Z" fill="#bdbdbd"/><path d="M9 30.5 L18 27 L36 26.5 L34 31 Z" fill="#5a5a5a"/><rect x="-0.5" y="-0.5" width="45" height="45" fill="none" stroke="#5aa0d0" stroke-width="1"/></svg>
<div class="abs td" style="left:381px;top:405px">IT0011</div>
<div class="abs td" style="left:461px;top:405px">Apple Laptop</div>
<div class="abs td" style="left:558px;top:405px">Computers</div>
<div class="abs td" style="left:653px;top:405px">545454</div>
<div class="abs td" style="left:726px;top:405px">Pieces</div>
<div class="abs td" style="left:792px;top:405px">8</div>
<div class="abs td" style="left:906px;top:405px">2</div>
<div class="abs td" style="left:1010px;top:405px">&#8377; 1375.00</div>
<div class="abs td" style="left:1092px;top:405px">Tax 10%<br>(10.00%)</div>
<div class="abs lbl" style="left:1161px;top:408px">Active</div>
<div class="abs abtn" style="left:1240px;top:405px"><span>Action</span></div>
<svg class="abs" style="left:1293px;top:422px" width="8" height="4" viewBox="0 0 8 4"><path d="M0 0 H8 L4 4Z" fill="#fff"/></svg>
<div class="abs" style="left:255px;top:460px;width:1068px;height:61px;background:#fff"></div>
<div class="abs" style="left:255px;top:459px;width:1068px;height:1px;background:#f4f4f4"></div>
<div class="abs" style="left:255px;top:459px;width:1px;height:62px;background:#f4f4f4"></div>
<div class="abs" style="left:294px;top:459px;width:1px;height:62px;background:#f4f4f4"></div>
<div class="abs" style="left:372px;top:459px;width:1px;height:62px;background:#f4f4f4"></div>
<div class="abs" style="left:452px;top:459px;width:1px;height:62px;background:#f4f4f4"></div>
<div class="abs" style="left:549px;top:459px;width:1px;height:62px;background:#f4f4f4"></div>
<div class="abs" style="left:644px;top:459px;width:1px;height:62px;background:#f4f4f4"></div>
<div class="abs" style="left:717px;top:459px;width:1px;height:62px;background:#f4f4f4"></div>
<div class="abs" style="left:783px;top:459px;width:1px;height:62px;background:#f4f4f4"></div>
<div class="abs" style="left:897px;top:459px;width:1px;height:62px;background:#f4f4f4"></div>
<div class="abs" style="left:1001px;top:459px;width:1px;height:62px;background:#f4f4f4"></div>
<div class="abs" style="left:1083px;top:459px;width:1px;height:62px;background:#f4f4f4"></div>
<div class="abs" style="left:1152px;top:459px;width:1px;height:62px;background:#f4f4f4"></div>
<div class="abs" style="left:1231px;top:459px;width:1px;height:62px;background:#f4f4f4"></div>
<div class="abs" style="left:1323px;top:459px;width:1px;height:62px;background:#f4f4f4"></div>
<div class="abs" style="left:264px;top:469px;width:22px;height:22px;border:1px solid #d2cdc6;background:#fff"></div>
<svg class="abs" width="46" height="46" viewBox="-1 -1 46 46" style="left:303px;top:468px"><rect width="44" height="44" fill="#fff"/><path d="M12 3 L41.5 3 L38 20.5 L8 20.5Z" fill="#262626"/><path d="M13 4.5 L40 4.5 L37 19 L9.5 19Z" fill="#4f3c52"/><path d="M10 17 Q16 9 24 8.5 Q32 8 39 12 L37 19 L9.5 19Z" fill="#b87a55"/><path d="M8 20.5 L38 20.5 L37.5 24.3 L7.5 24.3Z" fill="#e8e8e8"/><path d="M18 25 L29 25 L30 31.5 L17 31.5Z" fill="#c8c8c8"/><path d="M3 31.5 L28 31.5 L32 36.5 L7 36.5Z" fill="#dedede"/><rect x="-0.5" y="-0.5" width="45" height="45" fill="none" stroke="#5aa0d0" stroke-width="1"/></svg>
<div class="abs td" style="left:381px;top:468px">IT0010</div>
<div class="abs td" style="left:461px;top:468px">Apple PC</div>
<div class="abs td" style="left:558px;top:468px">Computers</div>
<div class="abs td" style="left:653px;top:468px">9897444</div>
<div class="abs td" style="left:726px;top:468px">Pieces</div>
<div class="abs td" style="left:792px;top:468px">10</div>
<div class="abs td" style="left:906px;top:468px">2</div>
<div class="abs td" style="left:1010px;top:468px">&#8377; 32450.00</div>
<div class="abs td" style="left:1092px;top:468px">Tax 18%<br>(18.00%)</div>
<div class="abs lbl" style="left:1161px;top:471px">Active</div>
<div class="abs abtn" style="left:1240px;top:468px"><span>Action</span></div>
<svg class="abs" style="left:1293px;top:485px" width="8" height="4" viewBox="0 0 8 4"><path d="M0 0 H8 L4 4Z" fill="#fff"/></svg>
<div class="abs" style="left:255px;top:522px;width:1068px;height:82px;background:#f9f9f9"></div>
<div class="abs" style="left:255px;top:521px;width:1068px;height:1px;background:#f4f4f4"></div>
<div class="abs" style="left:255px;top:521px;width:1px;height:83px;background:#f4f4f4"></div>
<div class="abs" style="left:294px;top:521px;width:1px;height:83px;background:#f4f4f4"></div>
<div class="abs" style="left:372px;top:521px;width:1px;height:83px;background:#f4f4f4"></div>
<div class="abs" style="left:452px;top:521px;width:1px;height:83px;background:#f4f4f4"></div>
<div class="abs" style="left:549px;top:521px;width:1px;height:83px;background:#f4f4f4"></div>
<div class="abs" style="left:644px;top:521px;width:1px;height:83px;background:#f4f4f4"></div>
<div class="abs" style="left:717px;top:521px;width:1px;height:83px;background:#f4f4f4"></div>
<div class="abs" style="left:783px;top:521px;width:1px;height:83px;background:#f4f4f4"></div>
<div class="abs" style="left:897px;top:521px;width:1px;height:83px;background:#f4f4f4"></div>
<div class="abs" style="left:1001px;top:521px;width:1px;height:83px;background:#f4f4f4"></div>
<div class="abs" style="left:1083px;top:521px;width:1px;height:83px;background:#f4f4f4"></div>
<div class="abs" style="left:1152px;top:521px;width:1px;height:83px;background:#f4f4f4"></div>
<div class="abs" style="left:1231px;top:521px;width:1px;height:83px;background:#f4f4f4"></div>
<div class="abs" style="left:1323px;top:521px;width:1px;height:83px;background:#f4f4f4"></div>
<div class="abs" style="left:264px;top:531px;width:22px;height:22px;border:1px solid #d2cdc6;background:#f9f9f9"></div>
<svg class="abs" width="46" height="66" viewBox="-1 -1 46 66" style="left:303px;top:530px"><rect width="44" height="64" fill="#e9ebf0"/><path d="M9 5.5 H28 M11 9.5 H26" stroke="#444" stroke-width="1.3"/><circle cx="39" cy="5" r="1.5" fill="#222"/><circle cx="36" cy="19" r="5" fill="#3a3a64"/><path d="M0 63 L0 36 Q3 31 12 30 L17 29 L28 30 Q36 32 38 38 L42 63Z" fill="#55585e"/><path d="M16 31 L25 31 L23 55 L18 55Z" fill="#3b4a7a"/><ellipse cx="21.5" cy="23" rx="6" ry="7.3" fill="#9b7865"/><path d="M15 21 Q15 14.5 21.5 14.5 Q28 14.5 28 21 Q25 17.5 21.5 17.5 Q18 17.5 15 21Z" fill="#2e2a2a"/><path d="M24 30 Q28 27 30 34 L27 38Z" fill="#a37d68"/><text x="22" y="61" font-family="Liberation Serif" font-size="7.5" font-weight="bold" fill="#fff" text-anchor="middle" textLength="38" lengthAdjust="spacingAndGlyphs">I Do What I Do</text><rect x="-0.5" y="-0.5" width="45" height="65" fill="none" stroke="#5aa0d0" stroke-width="1"/></svg>
<div class="abs td" style="left:381px;top:530px">IT0009</div>
<div class="abs td" style="left:461px;top:530px">I Do What I<br>Do</div>
<div class="abs td" style="left:558px;top:530px">Books</div>
<div class="abs td" style="left:653px;top:530px">984454</div>
<div class="abs td" style="left:726px;top:530px">Pieces</div>
<div class="abs td" style="left:792px;top:530px">19</div>
<div class="abs td" style="left:906px;top:530px">5</div>
<div class="abs td" style="left:1010px;top:530px">&#8377; 885.00</div>
<div class="abs td" style="left:1092px;top:530px">Tax 18%<br>(18.00%)</div>
<div class="abs lbl" style="left:1161px;top:533px">Active</div>
<div class="abs abtn" style="left:1240px;top:530px"><span>Action</span></div>
<svg class="abs" style="left:1293px;top:547px" width="8" height="4" viewBox="0 0 8 4"><path d="M0 0 H8 L4 4Z" fill="#fff"/></svg>
<div class="abs" style="left:255px;top:605px;width:1068px;height:83px;background:#fff"></div>
<div class="abs" style="left:255px;top:604px;width:1068px;height:1px;background:#f4f4f4"></div>
<div class="abs" style="left:255px;top:604px;width:1px;height:84px;background:#f4f4f4"></div>
<div class="abs" style="left:294px;top:604px;width:1px;height:84px;background:#f4f4f4"></div>
<div class="abs" style="left:372px;top:604px;width:1px;height:84px;background:#f4f4f4"></div>
<div class="abs" style="left:452px;top:604px;width:1px;height:84px;background:#f4f4f4"></div>
<div class="abs" style="left:549px;top:604px;width:1px;height:84px;background:#f4f4f4"></div>
<div class="abs" style="left:644px;top:604px;width:1px;height:84px;background:#f4f4f4"></div>
<div class="abs" style="left:717px;top:604px;width:1px;height:84px;background:#f4f4f4"></div>
<div class="abs" style="left:783px;top:604px;width:1px;height:84px;background:#f4f4f4"></div>
<div class="abs" style="left:897px;top:604px;width:1px;height:84px;background:#f4f4f4"></div>
<div class="abs" style="left:1001px;top:604px;width:1px;height:84px;background:#f4f4f4"></div>
<div class="abs" style="left:1083px;top:604px;width:1px;height:84px;background:#f4f4f4"></div>
<div class="abs" style="left:1152px;top:604px;width:1px;height:84px;background:#f4f4f4"></div>
<div class="abs" style="left:1231px;top:604px;width:1px;height:84px;background:#f4f4f4"></div>
<div class="abs" style="left:1323px;top:604px;width:1px;height:84px;background:#f4f4f4"></div>
<div class="abs" style="left:264px;top:614px;width:22px;height:22px;border:1px solid #d2cdc6;background:#fff"></div>
<svg class="abs" width="46" height="67" viewBox="-1 -1 46 67" style="left:303px;top:613px"><defs><linearGradient id="pg" x1="0" y1="0" x2="0" y2="1"><stop offset="0" stop-color="#263447"/><stop offset="1" stop-color="#3a4654"/></linearGradient></defs><rect width="44" height="65" fill="url(#pg)"/><path d="M7 4.5 H37" stroke="#b8c2cc" stroke-width="1.2" opacity="0.8"/><text x="22.5" y="19.5" font-family="Liberation Sans" font-size="11.5" fill="#e8ecef" text-anchor="middle" textLength="35" lengthAdjust="spacingAndGlyphs">PEOPLE</text><path d="M10 21.5 H34" stroke="#9aa6b2" stroke-width="0.6"/><path d="M7 25 H37 M9 28 H35" stroke="#8592a0" stroke-width="0.9" opacity="0.8"/><path d="M2 64 Q4 56 13 54 L31 54 Q40 56 42 64Z" fill="#7e8792"/><ellipse cx="22" cy="45" rx="8" ry="11" fill="#b5a395"/><path d="M13.5 42 Q13 31.5 22 31.5 Q31 31.5 30.5 42 Q28 36 22 36 Q16 36 13.5 42Z" fill="#3a3028"/><path d="M14.5 48 Q22 60 29.5 48 L29 55 Q22 61 15 55Z" fill="#4a3a30"/><path d="M15.5 43 H20.5 M23.5 43 H28.5" stroke="#e8e0d8" stroke-width="1.5"/><path d="M6 62.5 H38" stroke="#b8c2cc" stroke-width="1" opacity="0.6"/><rect x="-0.5" y="-0.5" width="45" height="66" fill="none" stroke="#5aa0d0" stroke-width="1"/></svg>
<div class="abs td" style="left:381px;top:613px">IT0008</div>
<div class="abs td" style="left:461px;top:613px">How to<br>Analyze<br>People</div>
<div class="abs td" style="left:558px;top:613px">Books</div>
<div class="abs td" style="left:653px;top:613px">887787</div>
<div class="abs td" style="left:726px;top:613px">Pieces</div>
<div class="abs td" style="left:792px;top:613px">10</div>
<div class="abs td" style="left:906px;top:613px">5</div>
<div class="abs td" style="left:1010px;top:613px">&#8377; 737.50</div>
<div class="abs td" style="left:1092px;top:613px">Tax 18%<br>(18.00%)</div>
<div class="abs lbl" style="left:1161px;top:616px">Active</div>
<div class="abs abtn" style="left:1240px;top:613px"><span>Action</span></div>
<svg class="abs" style="left:1293px;top:630px" width="8" height="4" viewBox="0 0 8 4"><path d="M0 0 H8 L4 4Z" fill="#fff"/></svg>
<div class="abs" style="left:255px;top:689px;width:1068px;height:56px;background:#f9f9f9"></div>
<div class="abs" style="left:255px;top:688px;width:1068px;height:1px;background:#f4f4f4"></div>
<div class="abs" style="left:255px;top:688px;width:1px;height:57px;background:#f4f4f4"></div>
<div class="abs" style="left:294px;top:688px;width:1px;height:57px;background:#f4f4f4"></div>
<div class="abs" style="left:372px;top:688px;width:1px;height:57px;background:#f4f4f4"></div>
<div class="abs" style="left:452px;top:688px;width:1px;height:57px;background:#f4f4f4"></div>
<div class="abs" style="left:549px;top:688px;width:1px;height:57px;background:#f4f4f4"></div>
<div class="abs" style="left:644px;top:688px;width:1px;height:57px;background:#f4f4f4"></div>
<div class="abs" style="left:717px;top:688px;width:1px;height:57px;background:#f4f4f4"></div>
<div class="abs" style="left:783px;top:688px;width:1px;height:57px;background:#f4f4f4"></div>
<div class="abs" style="left:897px;top:688px;width:1px;height:57px;background:#f4f4f4"></div>
<div class="abs" style="left:1001px;top:688px;width:1px;height:57px;background:#f4f4f4"></div>
<div class="abs" style="left:1083px;top:688px;width:1px;height:57px;background:#f4f4f4"></div>
<div class="abs" style="left:1152px;top:688px;width:1px;height:57px;background:#f4f4f4"></div>
<div class="abs" style="left:1231px;top:688px;width:1px;height:57px;background:#f4f4f4"></div>
<div class="abs" style="left:1323px;top:688px;width:1px;height:57px;background:#f4f4f4"></div>
<div class="abs" style="left:264px;top:698px;width:22px;height:22px;border:1px solid #d2cdc6;background:#f9f9f9"></div>
<svg class="abs" width="46" height="37" viewBox="-1 -1 46 37" style="left:303px;top:697px"><rect width="44" height="35" fill="#fff"/><ellipse cx="20" cy="32" rx="14" ry="1.5" fill="#d8d8d8"/><path d="M13 28 Q11 14 14.5 7 Q17 4.5 19.5 6 Q22.5 12 21.5 30 Q17 32 13 28Z" fill="#b48446"/><path d="M14 27 Q13.5 19 15.5 15.5 Q18.5 15 20 18 Q20.5 25 19.5 29.5Z" fill="#1d1d2e"/><path d="M21.5 30 Q22 15 23 6.5 Q25 5 26 8 Q29 15 33.5 29 Q29 31.5 24 31Z" fill="#c99a62"/><path d="M22.5 30.5 Q23 16 23.8 7" stroke="#f4efe6" stroke-width="1.2" fill="none"/><rect x="-0.5" y="-0.5" width="45" height="36" fill="none" stroke="#5aa0d0" stroke-width="1"/></svg>
<div class="abs td" style="left:381px;top:697px">IT0007</div>
<div class="abs td" style="left:461px;top:697px">WM Shoes</div>
<div class="abs td" style="left:558px;top:697px">Shoes</div>
<div class="abs td" style="left:653px;top:697px">65656565</div>
<div class="abs td" style="left:726px;top:697px">Pieces</div>
<div class="abs td" style="left:792px;top:697px">10</div>
<div class="abs td" style="left:906px;top:697px">5</div>
<div class="abs td" style="left:1010px;top:697px">&#8377; 1917.50</div>
<div class="abs td" style="left:1092px;top:697px">Tax 18%<br>(18.00%)</div>
<div class="abs lbl" style="left:1161px;top:700px">Active</div>
<div class="abs abtn" style="left:1240px;top:697px"><span>Action</span></div>
<svg class="abs" style="left:1293px;top:714px" width="8" height="4" viewBox="0 0 8 4"><path d="M0 0 H8 L4 4Z" fill="#fff"/></svg>
<div class="abs" style="left:255px;top:746px;width:1068px;height:61px;background:#fff"></div>
<div class="abs" style="left:255px;top:745px;width:1068px;height:1px;background:#f4f4f4"></div>
<div class="abs" style="left:255px;top:745px;width:1px;height:62px;background:#f4f4f4"></div>
<div class="abs" style="left:294px;top:745px;width:1px;height:62px;background:#f4f4f4"></div>
<div class="abs" style="left:372px;top:745px;width:1px;height:62px;background:#f4f4f4"></div>
<div class="abs" style="left:452px;top:745px;width:1px;height:62px;background:#f4f4f4"></div>
<div class="abs" style="left:549px;top:745px;width:1px;height:62px;background:#f4f4f4"></div>
<div class="abs" style="left:644px;top:745px;width:1px;height:62px;background:#f4f4f4"></div>
<div class="abs" style="left:717px;top:745px;width:1px;height:62px;background:#f4f4f4"></div>
<div class="abs" style="left:783px;top:745px;width:1px;height:62px;background:#f4f4f4"></div>
<div class="abs" style="left:897px;top:745px;width:1px;height:62px;background:#f4f4f4"></div>
<div class="abs" style="left:1001px;top:745px;width:1px;height:62px;background:#f4f4f4"></div>
<div class="abs" style="left:1083px;top:745px;width:1px;height:62px;background:#f4f4f4"></div>
<div class="abs" style="left:1152px;top:745px;width:1px;height:62px;background:#f4f4f4"></div>
<div class="abs" style="left:1231px;top:745px;width:1px;height:62px;background:#f4f4f4"></div>
<div class="abs" style="left:1323px;top:745px;width:1px;height:62px;background:#f4f4f4"></div>
<div class="abs" style="left:264px;top:755px;width:22px;height:22px;border:1px solid #d2cdc6;background:#fff"></div>
<svg class="abs" width="46" height="45" viewBox="-1 -1 46 45" style="left:303px;top:754px"><defs><linearGradient id="vg" x1="0" x2="1"><stop offset="0.55" stop-color="#fff"/><stop offset="1" stop-color="#dcdcdc"/></linearGradient></defs><rect width="44" height="43" fill="url(#vg)"/><text x="0.5" y="6.5" font-family="Liberation Serif" font-size="8" fill="#222" textLength="14" lengthAdjust="spacingAndGlyphs">VIP</text><path d="M1 36 Q3 31 10 27 Q13 22 12 14 L11 7.5 Q18 5 23 6.5 L30 1 Q38 6 42.8 17.5 L41.5 22 Q30 33 15 38.5 L2 39.5Z" fill="#141414"/><path d="M26 20 Q30 16 33 14" stroke="#777" stroke-width="0.6" opacity="0.7"/><path d="M15 38.5 Q30 33 41.5 22" stroke="#5a1a1a" stroke-width="0.8" fill="none" opacity="0.6"/><path d="M35.5 29 Q39.5 33 39 36.5 Q37.5 40 35.5 40 Q33 40 32 36.5 Q31.5 33 35.5 29Z" fill="#e2621a"/><path d="M33.3 37 L35.5 33.5 L37.7 37Z" fill="#3a1008"/><rect x="-0.5" y="-0.5" width="45" height="44" fill="none" stroke="#5aa0d0" stroke-width="1"/></svg>
<div class="abs td" style="left:381px;top:754px">IT0006</div>
<div class="abs td" style="left:461px;top:754px">VP Shoes</div>
<div class="abs td" style="left:558px;top:754px">Shoes</div>
<div class="abs td" style="left:653px;top:754px">656655</div>
<div class="abs td" style="left:726px;top:754px">Box</div>
<div class="abs td" style="left:792px;top:754px">10</div>
<div class="abs td" style="left:906px;top:754px">10</div>
<div class="abs td" style="left:1010px;top:754px">&#8377; 2062.50</div>
<div class="abs td" style="left:1092px;top:754px">Tax 10%<br>(10.00%)</div>
<div class="abs lbl" style="left:1161px;top:757px">Active</div>
<div class="abs abtn" style="left:1240px;top:754px"><span>Action</span></div>
<svg class="abs" style="left:1293px;top:771px" width="8" height="4" viewBox="0 0 8 4"><path d="M0 0 H8 L4 4Z" fill="#fff"/></svg>
<div class="abs" style="left:255px;top:808px;width:1068px;height:56px;background:#f9f9f9"></div>
<div class="abs" style="left:255px;top:807px;width:1068px;height:1px;background:#f4f4f4"></div>
<div class="abs" style="left:255px;top:807px;width:1px;height:57px;background:#f4f4f4"></div>
<div class="abs" style="left:294px;top:807px;width:1px;height:57px;background:#f4f4f4"></div>
<div class="abs" style="left:372px;top:807px;width:1px;height:57px;background:#f4f4f4"></div>
<div class="abs" style="left:452px;top:807px;width:1px;height:57px;background:#f4f4f4"></div>
<div class="abs" style="left:549px;top:807px;width:1px;height:57px;background:#f4f4f4"></div>
<div class="abs" style="left:644px;top:807px;width:1px;height:57px;background:#f4f4f4"></div>
<div class="abs" style="left:717px;top:807px;width:1px;height:57px;background:#f4f4f4"></div>
<div class="abs" style="left:783px;top:807px;width:1px;height:57px;background:#f4f4f4"></div>
<div class="abs" style="left:897px;top:807px;width:1px;height:57px;background:#f4f4f4"></div>
<div class="abs" style="left:1001px;top:807px;width:1px;height:57px;background:#f4f4f4"></div>
<div class="abs" style="left:1083px;top:807px;width:1px;height:57px;background:#f4f4f4"></div>
<div class="abs" style="left:1152px;top:807px;width:1px;height:57px;background:#f4f4f4"></div>
<div class="abs" style="left:1231px;top:807px;width:1px;height:57px;background:#f4f4f4"></div>
<div class="abs" style="left:1323px;top:807px;width:1px;height:57px;background:#f4f4f4"></div>
<div class="abs" style="left:264px;top:817px;width:22px;height:22px;border:1px solid #d2cdc6;background:#f9f9f9"></div>
<svg class="abs" width="46" height="27" viewBox="-1 -1 46 27" style="left:303px;top:816px"><rect width="44" height="25" fill="#fff"/><path d="M2 5 Q8 1.5 12 1 Q17 0.5 20 2 Q26 5 33 9 Q40 12 43 15.5 L43 18 Q30 21.5 22 21.5 L6 20.5 Q2 20 1.8 17Z" fill="#ea2420"/><path d="M6 20.5 L22 21.5 Q30 21.5 43 18 L42.5 19.5 Q30 23 22 23 L6 22Z" fill="#c81a16"/><path d="M4 6 Q6 4 9 4.5 L8 8Z" fill="#8a0d0a"/><path d="M13 3 Q20 5 27 10" stroke="#b01410" stroke-width="0.8" fill="none"/><rect x="21" y="20" width="1.6" height="2" fill="#ddd"/><rect x="-0.5" y="-0.5" width="45" height="26" fill="none" stroke="#5aa0d0" stroke-width="1"/></svg>
<div class="abs td" style="left:381px;top:816px">IT0005</div>
<div class="abs td" style="left:461px;top:816px">Rd Shoes</div>
<div class="abs td" style="left:558px;top:816px">Shoes</div>
<div class="abs td" style="left:653px;top:816px">54565</div>
<div class="abs td" style="left:726px;top:816px">Pieces</div>
<div class="abs td" style="left:792px;top:816px">9</div>
<div class="abs td" style="left:906px;top:816px">5</div>
<div class="abs td" style="left:1010px;top:816px">&#8377; 1557.60</div>
<div class="abs td" style="left:1092px;top:816px">Tax 18%<br>(18.00%)</div>
<div class="abs lbl" style="left:1161px;top:819px">Active</div>
<div class="abs abtn" style="left:1240px;top:816px"><span>Action</span></div>
<svg class="abs" style="left:1293px;top:833px" width="8" height="4" viewBox="0 0 8 4"><path d="M0 0 H8 L4 4Z" fill="#fff"/></svg>
<div class="abs" style="left:255px;top:865px;width:1068px;height:62px;background:#fff"></div>
<div class="abs" style="left:255px;top:864px;width:1068px;height:1px;background:#f4f4f4"></div>
<div class="abs" style="left:255px;top:864px;width:1px;height:63px;background:#f4f4f4"></div>
<div class="abs" style="left:294px;top:864px;width:1px;height:63px;background:#f4f4f4"></div>
<div class="abs" style="left:372px;top:864px;width:1px;height:63px;background:#f4f4f4"></div>
<div class="abs" style="left:452px;top:864px;width:1px;height:63px;background:#f4f4f4"></div>
<div class="abs" style="left:549px;top:864px;width:1px;height:63px;background:#f4f4f4"></div>
<div class="abs" style="left:644px;top:864px;width:1px;height:63px;background:#f4f4f4"></div>
<div class="abs" style="left:717px;top:864px;width:1px;height:63px;background:#f4f4f4"></div>
<div class="abs" style="left:783px;top:864px;width:1px;height:63px;background:#f4f4f4"></div>
<div class="abs" style="left:897px;top:864px;width:1px;height:63px;background:#f4f4f4"></div>
<div class="abs" style="left:1001px;top:864px;width:1px;height:63px;background:#f4f4f4"></div>
<div class="abs" style="left:1083px;top:864px;width:1px;height:63px;background:#f4f4f4"></div>
<div class="abs" style="left:1152px;top:864px;width:1px;height:63px;background:#f4f4f4"></div>
<div class="abs" style="left:1231px;top:864px;width:1px;height:63px;background:#f4f4f4"></div>
<div class="abs" style="left:1323px;top:864px;width:1px;height:63px;background:#f4f4f4"></div>
<div class="abs" style="left:264px;top:874px;width:22px;height:22px;border:1px solid #d2cdc6;background:#fff"></div>
<svg class="abs" width="46" height="46" viewBox="-1 -1 46 46" style="left:303px;top:873px"><rect width="44" height="44" fill="#fff"/><path d="M2 3 H11 M3 5.5 H10" stroke="#444" stroke-width="0.9"/><path d="M6 42 L7 12 Q8 5 16 3 L27 3 Q34 5 35 12 L35 42 L22 42 L21 30 L20 42Z" fill="#5b1f35"/><path d="M17 3 L26 3 L23.5 16 L21.5 22 L19.5 16Z" fill="#f2f2f2"/><path d="M19 5 L24 5 L21.5 7.5Z" fill="#111"/><path d="M16 3 L13 14 L21.5 28 M27 3 L30 14 L21.5 28" stroke="#26090f" stroke-width="1.6" fill="none"/><path d="M24 25.5 L40.5 25.5 L40.5 43.5 L24 43.5Z" fill="#4a1628"/><path d="M32 26 L32 43.5" stroke="#2a0b15" stroke-width="0.6"/><rect x="-0.5" y="-0.5" width="45" height="45" fill="none" stroke="#5aa0d0" stroke-width="1"/></svg>
<div class="abs td" style="left:381px;top:873px">IT0004</div>
<div class="abs td" style="left:461px;top:873px">Suits</div>
<div class="abs td" style="left:558px;top:873px">Men Wears</div>
<div class="abs td" style="left:653px;top:873px">6666</div>
<div class="abs td" style="left:726px;top:873px">Pieces</div>
<div class="abs td" style="left:792px;top:873px">17</div>
<div class="abs td" style="left:906px;top:873px">5</div>
<div class="abs td" style="left:1010px;top:873px">&#8377; 1250.00</div>
<div class="abs td" style="left:1092px;top:873px">Tax 10%<br>(10.00%)</div>
<div class="abs lbl" style="left:1161px;top:876px">Active</div>
<div class="abs abtn" style="left:1240px;top:873px"><span>Action</span></div>
<svg class="abs" style="left:1293px;top:890px" width="8" height="4" viewBox="0 0 8 4"><path d="M0 0 H8 L4 4Z" fill="#fff"/></svg>
<div class="abs" style="left:255px;top:927px;width:1069px;height:1px;background:#f4f4f4"></div>
<!--/TABLE-->
</body></html>
